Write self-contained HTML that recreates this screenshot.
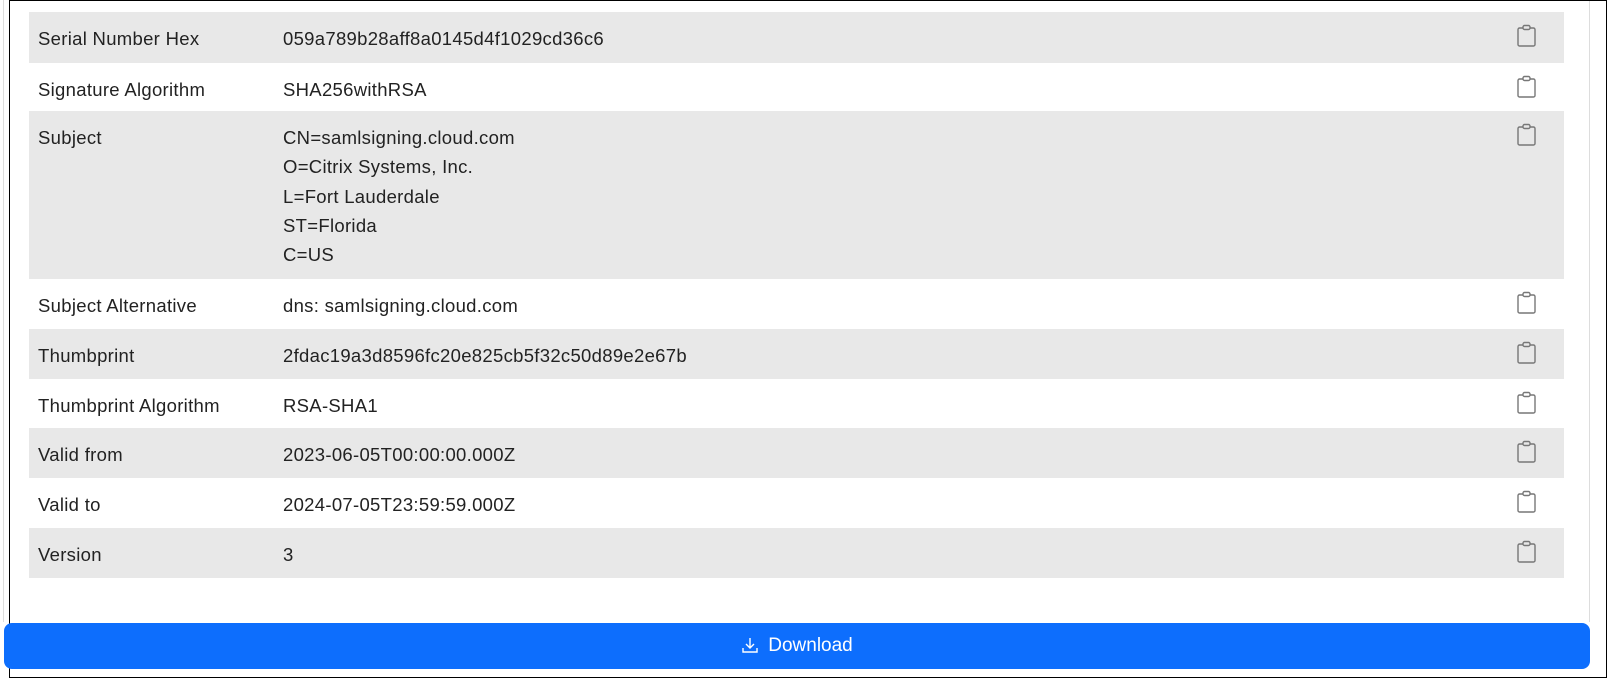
<!DOCTYPE html>
<html><head><meta charset="utf-8"><style>
body{margin:0;width:1610px;height:679px;background:#fff;position:relative;overflow:hidden;font-family:"Liberation Sans",sans-serif;color:#222;}
.frame{position:absolute;left:9px;top:0;width:1598px;height:678px;border:1px solid #000;box-sizing:border-box;}
.gl{position:absolute;left:3px;top:0;width:1px;height:622px;background:#ddd;}
.gr{position:absolute;left:1589px;top:0;width:1px;height:622px;background:#ddd;}
.row{position:absolute;left:29px;width:1535px;font-size:18.5px;letter-spacing:0.3px;}
.row.g{background:#e8e8e8;}
.row .l{position:absolute;left:9px;top:16px;line-height:21px;}
.row .v{position:absolute;left:254px;top:16px;line-height:21px;}
.row .v.m{top:12px;line-height:29.3px;}
.row svg{position:absolute;left:1485px;top:11px;}
.btn{position:absolute;left:4px;top:623px;width:1586px;height:46px;background:#0d6efd;border-radius:8px;color:#fff;font-size:19px;text-align:center;line-height:46px;}
.btn svg{vertical-align:-3px;margin-right:9px;}
</style></head><body>
<div class="gl"></div><div class="gr"></div>
<div class="frame"></div>
<div class="row g" style="top:12px;height:51px"><span class="l">Serial Number Hex</span><span class="v">059a789b28aff8a0145d4f1029cd36c6</span><svg width="26" height="26" viewBox="0 0 26 26" fill="none" stroke="#777" stroke-width="1.4"><path d="M8.5 5H5.5A1.5 1.5 0 0 0 4 6.5v15A1.5 1.5 0 0 0 5.5 23h14a1.5 1.5 0 0 0 1.5-1.5v-15A1.5 1.5 0 0 0 19.5 5h-3"/><rect x="9" y="2.5" width="7" height="4" rx="1.5"/></svg></div>
<div class="row" style="top:63px;height:48px"><span class="l">Signature Algorithm</span><span class="v">SHA256withRSA</span><svg width="26" height="26" viewBox="0 0 26 26" fill="none" stroke="#777" stroke-width="1.4"><path d="M8.5 5H5.5A1.5 1.5 0 0 0 4 6.5v15A1.5 1.5 0 0 0 5.5 23h14a1.5 1.5 0 0 0 1.5-1.5v-15A1.5 1.5 0 0 0 19.5 5h-3"/><rect x="9" y="2.5" width="7" height="4" rx="1.5"/></svg></div>
<div class="row g" style="top:111px;height:168px"><span class="l">Subject</span><span class="v m">CN=samlsigning.cloud.com<br>O=Citrix Systems, Inc.<br>L=Fort Lauderdale<br>ST=Florida<br>C=US</span><svg width="26" height="26" viewBox="0 0 26 26" fill="none" stroke="#777" stroke-width="1.4"><path d="M8.5 5H5.5A1.5 1.5 0 0 0 4 6.5v15A1.5 1.5 0 0 0 5.5 23h14a1.5 1.5 0 0 0 1.5-1.5v-15A1.5 1.5 0 0 0 19.5 5h-3"/><rect x="9" y="2.5" width="7" height="4" rx="1.5"/></svg></div>
<div class="row" style="top:279px;height:50px"><span class="l">Subject Alternative</span><span class="v">dns: samlsigning.cloud.com</span><svg width="26" height="26" viewBox="0 0 26 26" fill="none" stroke="#777" stroke-width="1.4"><path d="M8.5 5H5.5A1.5 1.5 0 0 0 4 6.5v15A1.5 1.5 0 0 0 5.5 23h14a1.5 1.5 0 0 0 1.5-1.5v-15A1.5 1.5 0 0 0 19.5 5h-3"/><rect x="9" y="2.5" width="7" height="4" rx="1.5"/></svg></div>
<div class="row g" style="top:329px;height:50px"><span class="l">Thumbprint</span><span class="v">2fdac19a3d8596fc20e825cb5f32c50d89e2e67b</span><svg width="26" height="26" viewBox="0 0 26 26" fill="none" stroke="#777" stroke-width="1.4"><path d="M8.5 5H5.5A1.5 1.5 0 0 0 4 6.5v15A1.5 1.5 0 0 0 5.5 23h14a1.5 1.5 0 0 0 1.5-1.5v-15A1.5 1.5 0 0 0 19.5 5h-3"/><rect x="9" y="2.5" width="7" height="4" rx="1.5"/></svg></div>
<div class="row" style="top:379px;height:49px"><span class="l">Thumbprint Algorithm</span><span class="v">RSA-SHA1</span><svg width="26" height="26" viewBox="0 0 26 26" fill="none" stroke="#777" stroke-width="1.4"><path d="M8.5 5H5.5A1.5 1.5 0 0 0 4 6.5v15A1.5 1.5 0 0 0 5.5 23h14a1.5 1.5 0 0 0 1.5-1.5v-15A1.5 1.5 0 0 0 19.5 5h-3"/><rect x="9" y="2.5" width="7" height="4" rx="1.5"/></svg></div>
<div class="row g" style="top:428px;height:50px"><span class="l">Valid from</span><span class="v">2023-06-05T00:00:00.000Z</span><svg width="26" height="26" viewBox="0 0 26 26" fill="none" stroke="#777" stroke-width="1.4"><path d="M8.5 5H5.5A1.5 1.5 0 0 0 4 6.5v15A1.5 1.5 0 0 0 5.5 23h14a1.5 1.5 0 0 0 1.5-1.5v-15A1.5 1.5 0 0 0 19.5 5h-3"/><rect x="9" y="2.5" width="7" height="4" rx="1.5"/></svg></div>
<div class="row" style="top:478px;height:50px"><span class="l">Valid to</span><span class="v">2024-07-05T23:59:59.000Z</span><svg width="26" height="26" viewBox="0 0 26 26" fill="none" stroke="#777" stroke-width="1.4"><path d="M8.5 5H5.5A1.5 1.5 0 0 0 4 6.5v15A1.5 1.5 0 0 0 5.5 23h14a1.5 1.5 0 0 0 1.5-1.5v-15A1.5 1.5 0 0 0 19.5 5h-3"/><rect x="9" y="2.5" width="7" height="4" rx="1.5"/></svg></div>
<div class="row g" style="top:528px;height:50px"><span class="l">Version</span><span class="v">3</span><svg width="26" height="26" viewBox="0 0 26 26" fill="none" stroke="#777" stroke-width="1.4"><path d="M8.5 5H5.5A1.5 1.5 0 0 0 4 6.5v15A1.5 1.5 0 0 0 5.5 23h14a1.5 1.5 0 0 0 1.5-1.5v-15A1.5 1.5 0 0 0 19.5 5h-3"/><rect x="9" y="2.5" width="7" height="4" rx="1.5"/></svg></div>
<div class="btn"><svg width="18" height="18" viewBox="0 0 18 18" fill="none" stroke="#fff" stroke-width="1.4"><path d="M9 2v10M5 8l4 4 4-4M2 12v4h14v-4"/></svg>Download</div>
</body></html>
